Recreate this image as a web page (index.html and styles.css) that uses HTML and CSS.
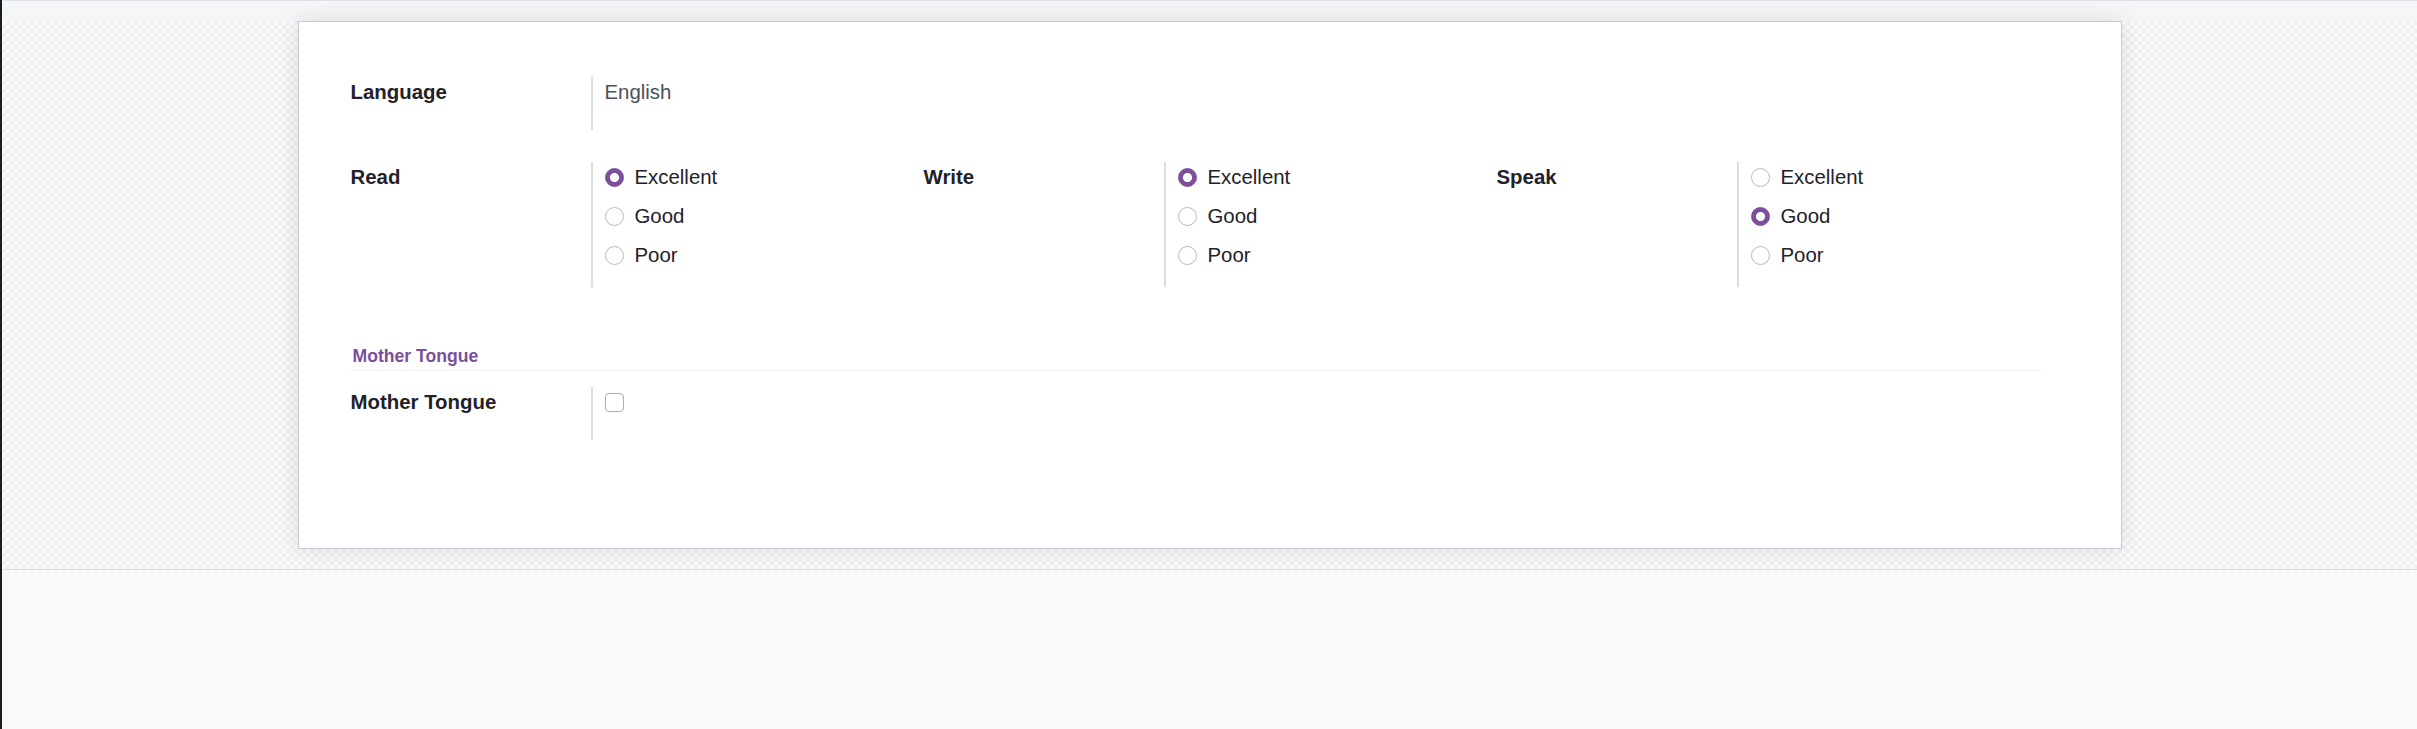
FILE: index.html
```html
<!DOCTYPE html>
<html lang="en">
<head>
<meta charset="utf-8">
<title>Language</title>
<link rel="stylesheet" href="styles.css">
</head>
<body>
<div class="app">
  <div class="edge"></div>
  <div class="main">
    <div class="topbar"></div>
    <div class="sheet-bg">
      <div class="sheet">
        <div class="row row-simple">
          <div class="label">Language</div>
          <div class="field field-text"><span class="value">English</span></div>
        </div>

        <div class="row row-levels">
          <div class="label">Read</div>
          <div class="field field-radios">
            <ul class="radios">
              <li class="radio"><span class="dot checked"></span>Excellent</li>
              <li class="radio"><span class="dot"></span>Good</li>
              <li class="radio"><span class="dot"></span>Poor</li>
            </ul>
          </div>
          <div class="label">Write</div>
          <div class="field field-radios">
            <ul class="radios">
              <li class="radio"><span class="dot checked"></span>Excellent</li>
              <li class="radio"><span class="dot"></span>Good</li>
              <li class="radio"><span class="dot"></span>Poor</li>
            </ul>
          </div>
          <div class="label">Speak</div>
          <div class="field field-radios">
            <ul class="radios">
              <li class="radio"><span class="dot"></span>Excellent</li>
              <li class="radio"><span class="dot checked"></span>Good</li>
              <li class="radio"><span class="dot"></span>Poor</li>
            </ul>
          </div>
        </div>

        <div class="separator">Mother Tongue</div>

        <div class="row row-simple row-check">
          <div class="label">Mother Tongue</div>
          <div class="field field-text"><span class="check-line"><span class="checkbox"></span></span></div>
        </div>
      </div>
    </div>
    <div class="bottom"></div>
  </div>
</div>
</body>
</html>
```

FILE: styles.css
```css
html, body {
  margin: 0;
  padding: 0;
}

body {
  font-family: "Liberation Sans", Arial, sans-serif;
  font-size: 20.4px;
  line-height: 1.5;
  color: #1f2229;
  background: #f8f9fa;
}

.app {
  display: flex;
  min-height: 729px;
}

.edge {
  flex: none;
  width: 2px;
  background: #1d1d1f;
}

.main {
  flex: 1;
  display: flex;
  flex-direction: column;
  min-width: 0;
}

.topbar {
  height: 20px;
  border-top: 1px solid #dfe2e6;
  background: #f5f6f8;
}

.sheet-bg {
  padding-bottom: 20px;
  border-bottom: 1px solid #d9dbde;
  background-color: #fbfbfb;
  background-image: conic-gradient(#f0f0f0 25%, transparent 0 50%, #f0f0f0 0 75%, transparent 0);
  background-size: 8px 8px;
}

.bottom {
  flex: 1;
  background: #f8f9fa;
}

.sheet {
  position: relative;
  z-index: 1;
  box-sizing: border-box;
  width: 1824px;
  margin: 0 auto;
  padding: 55px 51px 108px 52px;
  background: #fff;
  border: 1px solid #cbc9d9;
  box-shadow: 0 0 24px rgba(0, 0, 0, 0.11);
}

.row {
  display: grid;
  grid-template-columns: 240px 1fr;
}

.row-simple {
  margin-bottom: 32px;
}

.row-levels {
  grid-template-columns: repeat(3, 240px 1fr);
}

.label {
  font-weight: 700;
  color: #1f2229;
}

.field {
  border-left: 2px solid #dcdcdc;
  padding-left: 12px;
}

.field-text {
  padding-bottom: 22.4px;
}

.value {
  color: #4b505b;
}

.field-radios {
  padding-bottom: 8px;
}

.radios {
  list-style: none;
  margin: 0;
  padding: 0;
}

.radio {
  display: flex;
  align-items: center;
  gap: 11px;
  height: 30.6px;
  margin-bottom: 8.4px;
  color: #1f2229;
}

.dot {
  flex: none;
  box-sizing: border-box;
  width: 19px;
  height: 19px;
  border-radius: 50%;
  border: 1px solid #b5bac2;
  background: #fff;
}

.dot.checked {
  border-color: #7b4f9c;
  background: radial-gradient(circle, #fff 0 4.2px, #7b4f9c 4.8px);
}

.separator {
  margin: 56px 28px 0 0;
  padding: 0 0 1px 2px;
  font-size: 17.6px;
  line-height: 26.4px;
  font-weight: 700;
  color: #7b4f9c;
  border-bottom: 1px solid #eff0f2;
}

.row-check {
  margin-top: 15.6px;
  margin-bottom: 0;
}

.check-line {
  display: flex;
  align-items: center;
  height: 30.6px;
}

.checkbox {
  box-sizing: border-box;
  width: 19px;
  height: 19px;
  border: 1px solid #a7aebb;
  border-radius: 4px;
  background: #fff;
}
```
